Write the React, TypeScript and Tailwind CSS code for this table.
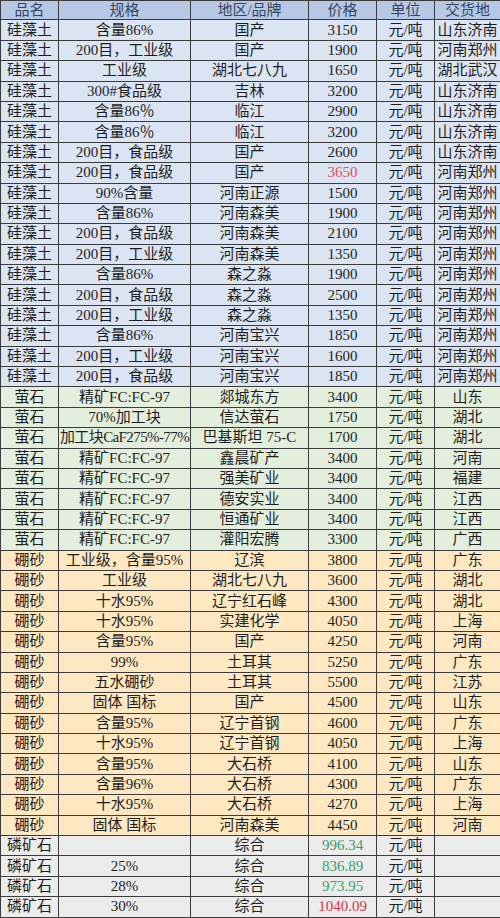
type Row = {
  name: string;
  spec: string;
  brand: string;
  price: string;
  unit: string;
  place: string;
  priceColor?: string;
};

type Section = {
  bg: string;
  rows: Row[];
};

const diatomite: [string, string, string, string][] = [
  ["含量86%", "国产", "3150", "山东济南"],
  ["200目，工业级", "国产", "1900", "河南郑州"],
  ["工业级", "湖北七八九", "1650", "湖北武汉"],
  ["300#食品级", "吉林", "3200", "山东济南"],
  ["含量86％", "临江", "2900", "山东济南"],
  ["含量86％", "临江", "3200", "山东济南"],
  ["200目，食品级", "国产", "2600", "山东济南"],
  ["200目，食品级", "国产", "3650", "河南郑州"],
  ["90%含量", "河南正源", "1500", "河南郑州"],
  ["含量86%", "河南森美", "1900", "河南郑州"],
  ["200目，食品级", "河南森美", "2100", "河南郑州"],
  ["200目，工业级", "河南森美", "1350", "河南郑州"],
  ["含量86%", "森之淼", "1900", "河南郑州"],
  ["200目，食品级", "森之淼", "2500", "河南郑州"],
  ["200目，工业级", "森之淼", "1350", "河南郑州"],
  ["含量86%", "河南宝兴", "1850", "河南郑州"],
  ["200目，工业级", "河南宝兴", "1600", "河南郑州"],
  ["200目，食品级", "河南宝兴", "1850", "河南郑州"],
];

const fluorite: [string, string, string, string][] = [
  ["精矿FC:FC-97", "郯城东方", "3400", "山东"],
  ["70%加工块", "信达萤石", "1750", "湖北"],
  ["加工块CaF275%-77%", "巴基斯坦 75-C", "1700", "湖北"],
  ["精矿FC:FC-97", "鑫晨矿产", "3400", "河南"],
  ["精矿FC:FC-97", "强美矿业", "3400", "福建"],
  ["精矿FC:FC-97", "德安实业", "3400", "江西"],
  ["精矿FC:FC-97", "恒通矿业", "3400", "江西"],
  ["精矿FC:FC-97", "灌阳宏腾", "3300", "广西"],
];

const borax: [string, string, string, string][] = [
  ["工业级，含量95%", "辽滨", "3800", "广东"],
  ["工业级", "湖北七八九", "3600", "湖北"],
  ["十水95%", "辽宁红石峰", "4300", "湖北"],
  ["十水95%", "实建化学", "4050", "上海"],
  ["含量95%", "国产", "4250", "河南"],
  ["99%", "土耳其", "5250", "广东"],
  ["五水硼砂", "土耳其", "5500", "江苏"],
  ["固体 国标", "国产", "4500", "山东"],
  ["含量95%", "辽宁首钢", "4600", "广东"],
  ["十水95%", "辽宁首钢", "4050", "上海"],
  ["含量95%", "大石桥", "4100", "山东"],
  ["含量96%", "大石桥", "4300", "广东"],
  ["十水95%", "大石桥", "4270", "上海"],
  ["固体 国标", "河南森美", "4450", "河南"],
];

const phosphate: [string, string][] = [
  ["", "996.34"],
  ["25%", "836.89"],
  ["28%", "973.95"],
  ["30%", "1040.09"],
];

const toRows = (name: string, list: [string, string, string, string][]): Row[] =>
  list.map(([spec, brand, price, place]) => ({
    name,
    spec,
    brand,
    price,
    unit: "元/吨",
    place,
    priceColor: price === "3650" ? "text-[#e0504f]" : undefined,
  }));

const sections: Section[] = [
  { bg: "bg-[#dbe4f2]", rows: toRows("硅藻土", diatomite) },
  { bg: "bg-[#e3eedc]", rows: toRows("萤石", fluorite) },
  { bg: "bg-[#fde8c2]", rows: toRows("硼砂", borax) },
  {
    bg: "bg-[#ececec]",
    rows: phosphate.map(([spec, price]) => ({
      name: "磷矿石",
      spec,
      brand: "综合",
      price,
      unit: "元/吨",
      place: "",
      priceColor: price === "1040.09" ? "text-[#d8343f]" : "text-[#3a9e6a]",
    })),
  },
];

const cols = "grid grid-cols-[58px_132px_118px_68px_58px_66px]";
const font = { fontFamily: '"Liberation Serif", "Noto Sans CJK SC", serif' };

function Cell({ children, className = "" }: { children: React.ReactNode; className?: string }) {
  return (
    <div
      className={`flex items-center justify-center overflow-hidden whitespace-nowrap border-r border-b border-[#3c3c3c] leading-none ${className}`}
    >
      {children}
    </div>
  );
}

export default function App() {
  const header = ["品名", "规格", "地区/品牌", "价格", "单位", "交货地"];
  return (
    <div className="h-[918px] w-[500px] overflow-hidden bg-white text-[15px] text-[#1e1e1e]" style={font}>
      <div className={`${cols} h-[20.4px] border-l border-t border-[#3c3c3c] bg-[#b6c8e6] text-[#34465e]`}>
        {header.map((h) => (
          <Cell key={h}>{h}</Cell>
        ))}
      </div>
      {sections.map((section, si) =>
        section.rows.map((row, ri) => (
          <div key={`${si}-${ri}`} className={`${cols} h-[20.4px] border-l border-[#3c3c3c] ${section.bg}`}>
            <Cell>{row.name}</Cell>
            <Cell className={row.spec.length > 12 ? "tracking-[-0.6px]" : ""}>{row.spec}</Cell>
            <Cell>{row.brand}</Cell>
            <Cell className={row.priceColor ?? ""}>{row.price}</Cell>
            <Cell>{row.unit}</Cell>
            <Cell>{row.place}</Cell>
          </div>
        ))
      )}
    </div>
  );
}
